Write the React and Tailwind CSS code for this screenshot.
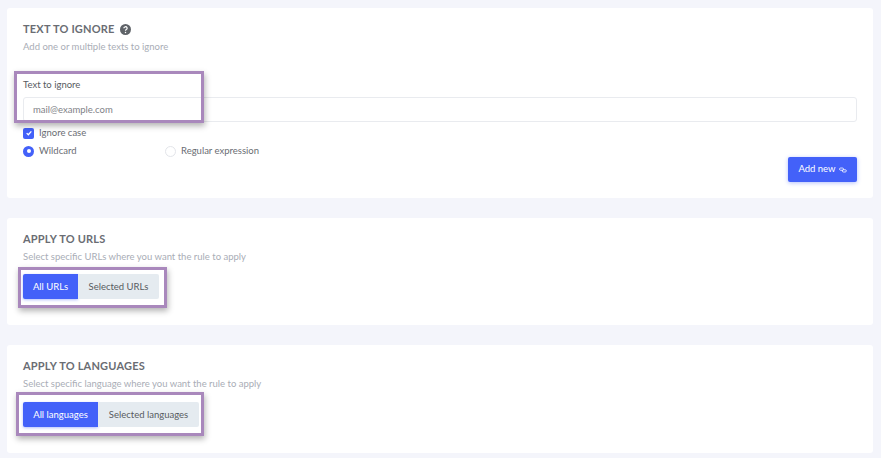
import React from 'react'

function SectionHead({ title, subtitle, children }) {
  return (
    <div>
      <div className="flex items-center gap-[5px] h-[16px]">
        <h2 className="text-[11px] leading-[16px] font-bold tracking-[0.2px] text-[#6a6d73]">{title}</h2>
        {children}
      </div>
      <p className="mt-[2px] text-[9.5px] leading-[16px] text-[#a9adb6]">{subtitle}</p>
    </div>
  )
}

function Toggle({ first, second, firstWidth, secondWidth }) {
  return (
    <div className="flex h-[25px] text-[9.5px]">
      <button className={`${firstWidth} pt-[1px] rounded-l-[2px] bg-[#4361f9] text-white shadow-[0_1px_3px_rgba(67,97,249,0.4)]`}>{first}</button>
      <button className={`${secondWidth} pt-[1px] rounded-r-[2px] bg-[#e5ebf0] text-[#585b61]`}>{second}</button>
    </div>
  )
}

function Highlight({ className }) {
  return (
    <div className={`absolute border-[3px] border-[#a988bc] shadow-[1px_3px_6px_rgba(0,0,0,0.3)] pointer-events-none ${className}`} />
  )
}

export default function App() {
  return (
    <div className="relative w-[881px] h-[458px] overflow-hidden bg-[#f4f5fb] pt-[8px] pl-[7px] font-['Lato','Noto_Sans',sans-serif]">
      <div className="flex flex-col gap-[20px] w-[866px]">
        {/* Text to ignore */}
        <section className="h-[190px] rounded-[3px] bg-white pt-[13px] px-[16px]">
          <SectionHead title="TEXT TO IGNORE" subtitle="Add one or multiple texts to ignore">
            <svg viewBox="0 0 16 16" className="w-[11px] h-[11px]">
              <circle cx="8" cy="8" r="8" fill="#5f6368" />
              <path d="M5.6 6.2a2.4 2.2 0 1 1 3.6 1.9c-.8.5-1.2.9-1.2 1.7" fill="none" stroke="#fff" strokeWidth="1.8" />
              <circle cx="8" cy="12.3" r="1.1" fill="#fff" />
            </svg>
          </SectionHead>
          <label className="block mt-[23px] text-[9.5px] leading-[14px] text-[#585b61]">Text to ignore</label>
          <div className="mt-[5px] h-[25px] flex items-center rounded-[3px] border border-[#e9ebef] pl-[9px] pt-[1px] text-[9.5px] text-[#7f8288]">
            mail@example.com
          </div>
          <div className="mt-[5px] flex items-center gap-[5px] h-[12px] text-[9.5px] text-[#6a6d73]">
            <span className="flex items-center justify-center w-[11px] h-[11px] rounded-[2px] bg-[#4361f9]">
              <svg viewBox="0 0 12 12" className="w-[8px] h-[8px]">
                <path d="M2.5 6.2 5 8.6l4.5-5" fill="none" stroke="#fff" strokeWidth="2" />
              </svg>
            </span>
            Ignore case
          </div>
          <div className="mt-[6px] flex items-center h-[12px] text-[9.5px] text-[#6a6d73]">
            <span className="flex items-center gap-[5px] w-[142px]">
              <span className="flex items-center justify-center w-[11px] h-[11px] rounded-full bg-[#4361f9]">
                <span className="w-[4px] h-[4px] rounded-full bg-white" />
              </span>
              Wildcard
            </span>
            <span className="flex items-center gap-[5px]">
              <span className="w-[11px] h-[11px] rounded-full border border-[#e3e5ea]" />
              Regular expression
            </span>
          </div>
          <div className="flex justify-end">
            <button className="flex items-center justify-center gap-[3px] w-[69px] h-[25px] rounded-[2px] bg-[#4361f9] text-[9.5px] text-white shadow-[0_1px_4px_rgba(67,97,249,0.4)]">
              Add new
              <svg viewBox="0 0 12 8" className="w-[8px] h-[6px]" fill="none" stroke="#fff" strokeWidth="1.2">
                <rect x="0.8" y="1" width="6" height="3.4" rx="1.7" />
                <rect x="5" y="3.6" width="6" height="3.4" rx="1.7" />
              </svg>
            </button>
          </div>
        </section>

        {/* Apply to urls */}
        <section className="h-[107px] rounded-[3px] bg-white pt-[13px] px-[16px]">
          <SectionHead title="APPLY TO URLS" subtitle="Select specific URLs where you want the rule to apply" />
          <div className="mt-[9px]">
            <Toggle first="All URLs" second="Selected URLs" firstWidth="w-[55px]" secondWidth="w-[81px]" />
          </div>
        </section>

        {/* Apply to languages */}
        <section className="h-[108px] rounded-[3px] bg-white pt-[13px] px-[16px]">
          <SectionHead title="APPLY TO LANGUAGES" subtitle="Select specific language where you want the rule to apply" />
          <div className="mt-[10px]">
            <Toggle first="All languages" second="Selected languages" firstWidth="w-[75px]" secondWidth="w-[101px]" />
          </div>
        </section>
      </div>

      {/* Annotation boxes drawn over the screenshot */}
      <Highlight className="left-[14px] top-[71px] w-[190px] h-[52px]" />
      <Highlight className="left-[18px] top-[267px] w-[149px] h-[41px]" />
      <Highlight className="left-[16px] top-[392px] w-[188px] h-[44px]" />
    </div>
  )
}
